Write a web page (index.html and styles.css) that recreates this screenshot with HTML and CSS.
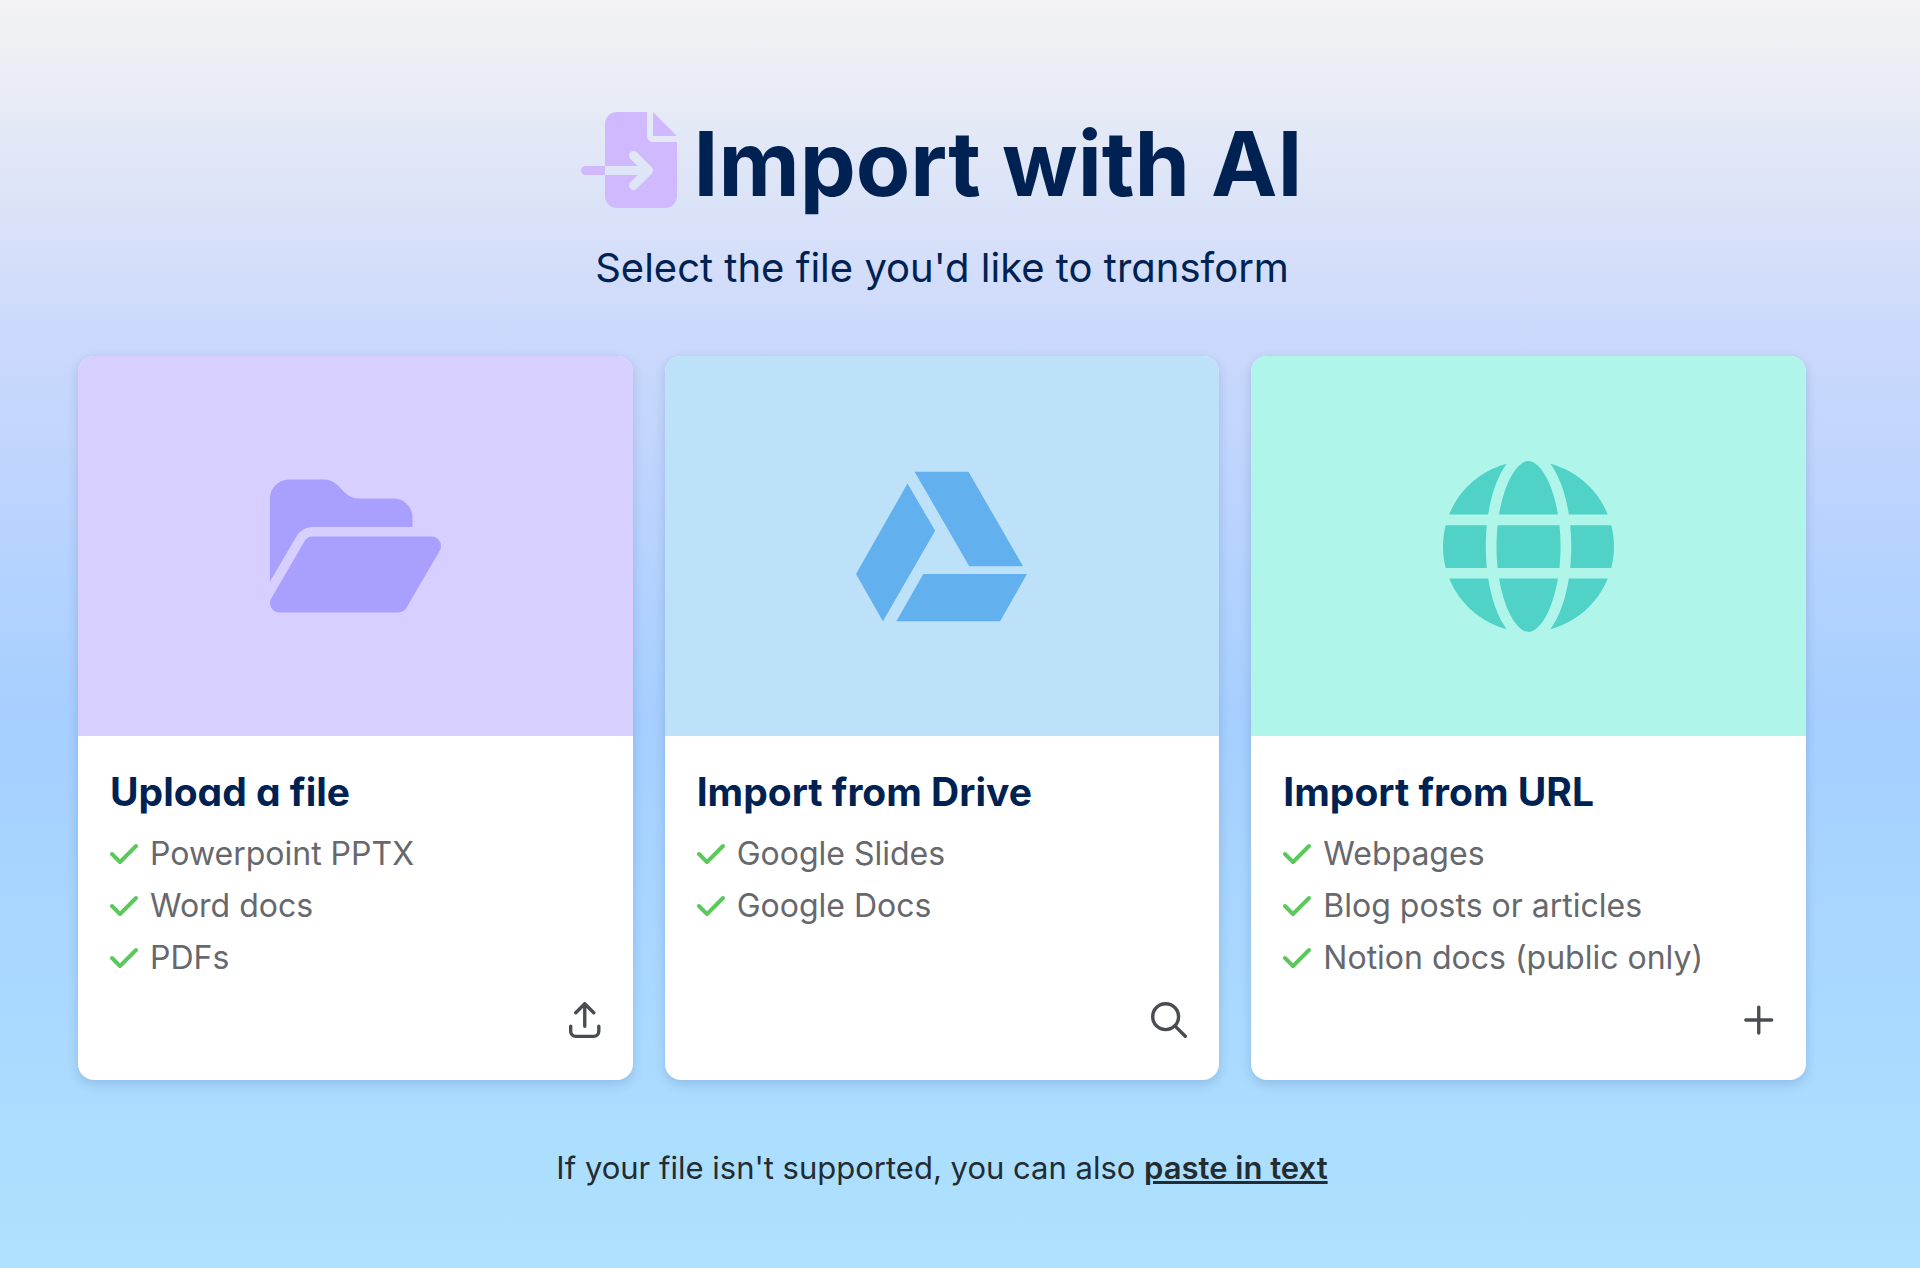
FILE: index.html
```html
<!DOCTYPE html>
<html lang="en">
<head>
<meta charset="utf-8">
<title>Import with AI</title>
<meta name="viewport" content="width=device-width, initial-scale=1">
<link rel="stylesheet" href="styles.css">
</head>
<body>
<svg class="sprite" aria-hidden="true">
  <symbol id="check" viewBox="0 0 448 512"><path d="M438.6 105.4c12.5 12.5 12.5 32.8 0 45.3l-256 256c-12.5 12.5-32.8 12.5-45.3 0l-128-128c-12.5-12.5-12.5-32.8 0-45.3s32.8-12.5 45.3 0L160 338.7 393.4 105.4c12.5-12.5 32.8-12.5 45.3 0z"/></symbol>
</svg>
<main class="page">
  <header class="header">
    <div class="headline">
      <svg class="headline-icon" viewBox="0 0 512 512" aria-hidden="true"><path d="M128 64c0-35.300 28.700-64 64-64L352 0l0 128c0 17.700 14.300 32 32 32l128 0 0 288c0 35.300-28.700 64-64 64l-256 0c-35.300 0-64-28.700-64-64l0-112 174.100 0-39 39c-9.400 9.400-9.400 24.600 0 33.900s24.600 9.400 33.900 0l80-80c9.400-9.400 9.400-24.600 0-33.900l-80-80c-9.400-9.400-24.600-9.400-33.900 0s-9.400 24.600 0 33.900l39 39L128 288l0-224zm0 224l0 48L24 336c-13.300 0-24-10.700-24-24s10.700-24 24-24l104 0zM512 128l-128 0L384 0 512 128z"/></svg>
      <h1 class="title">Import with AI</h1>
    </div>
    <p class="subtitle">Select the file you'd like to transform</p>
  </header>

  <section class="cards" aria-label="Import sources">
    <article class="card">
      <div class="art art-upload">
        <svg class="art-icon" viewBox="0 0 576 512" aria-hidden="true"><path d="M88.700 223.800L0 375.800 0 96C0 60.700 28.700 32 64 32l117.500 0c17 0 33.300 6.700 45.300 18.700l26.500 26.500c12 12 28.300 18.700 45.300 18.700L416 96c35.300 0 64 28.700 64 64l0 32-336 0c-22.800 0-43.800 12.100-55.300 31.800zm27.600 16.100C122.100 230 132.600 224 144 224l400 0c11.500 0 22 6.100 27.700 16.100s5.700 22.200-.1 32.100l-112 192C453.900 474 443.400 480 432 480L32 480c-11.500 0-22-6.100-27.700-16.100s-5.700-22.200 .1-32.100l112-192z"/></svg>
      </div>
      <div class="card-body">
        <h2 class="card-title">Upload a file</h2>
        <ul class="formats">
          <li class="format"><svg class="check"><use href="#check"/></svg>Powerpoint PPTX</li>
          <li class="format"><svg class="check"><use href="#check"/></svg>Word docs</li>
          <li class="format"><svg class="check"><use href="#check"/></svg>PDFs</li>
        </ul>
        <button class="action" type="button" aria-label="Upload a file">
          <svg class="action-icon" viewBox="0 0 448 512"><path d="M224 344V28M96 152L224 24l128 128M24 344v72a72 72 0 0 0 72 72h256a72 72 0 0 0 72-72v-72"/></svg>
        </button>
      </div>
    </article>

    <article class="card">
      <div class="art art-drive">
        <svg class="art-icon" viewBox="0 0 512 512" aria-hidden="true"><path d="M339 314.900L175.400 32h161.200l163.600 282.900H339zm-137.500 23.600L120.900 480h310.500L512 338.500H201.500zM154.100 67.400L0 338.500 80.600 480 237 208.800 154.100 67.400z"/></svg>
      </div>
      <div class="card-body">
        <h2 class="card-title">Import from Drive</h2>
        <ul class="formats">
          <li class="format"><svg class="check"><use href="#check"/></svg>Google Slides</li>
          <li class="format"><svg class="check"><use href="#check"/></svg>Google Docs</li>
        </ul>
        <button class="action" type="button" aria-label="Search Drive">
          <svg class="action-icon" viewBox="0 0 512 512"><circle cx="208" cy="208" r="184"/><path d="M340 340l148 148"/></svg>
        </button>
      </div>
    </article>

    <article class="card">
      <div class="art art-url">
        <svg class="art-icon" viewBox="0 0 512 512" aria-hidden="true"><path d="M352 256c0 22.200-1.200 43.600-3.300 64l-185.300 0c-2.200-20.400-3.300-41.800-3.300-64s1.200-43.600 3.300-64l185.300 0c2.200 20.400 3.300 41.800 3.300 64zm28.800-64l123.100 0c5.300 20.500 8.100 41.900 8.100 64s-2.800 43.500-8.100 64l-123.100 0c2.100-20.600 3.200-42 3.200-64s-1.100-43.400-3.200-64zm112.600-32l-116.700 0c-10-63.900-29.800-117.400-55.300-151.600c78.300 20.700 142 77.500 171.900 151.600zm-149.100 0l-176.600 0c6.100-36.400 15.500-68.600 27-94.700c10.500-23.600 22.200-40.700 33.500-51.500C239.400 3.200 248.700 0 256 0s16.600 3.200 27.800 13.800c11.300 10.800 23 27.900 33.500 51.500c11.600 26 20.900 58.200 27 94.700zm-209 0L18.600 160C48.600 85.900 112.200 29.100 190.600 8.400C165.100 42.600 145.300 96.100 135.300 160zM8.100 192l123.100 0c-2.100 20.600-3.200 42-3.200 64s1.100 43.400 3.200 64L8.100 320C2.800 299.500 0 278.100 0 256s2.800-43.500 8.100-64zM194.700 446.600c-11.600-26-20.900-58.200-27-94.600l176.600 0c-6.100 36.400-15.500 68.600-27 94.600c-10.500 23.600-22.200 40.700-33.500 51.500C272.600 508.800 263.300 512 256 512s-16.600-3.200-27.800-13.800c-11.300-10.800-23-27.900-33.500-51.500zM135.300 352c10 63.900 29.800 117.400 55.300 151.600C112.200 482.900 48.600 426.100 18.600 352l116.700 0zm358.100 0c-30 74.100-93.600 130.900-171.900 151.600c25.500-34.200 45.200-87.700 55.300-151.600l116.700 0z"/></svg>
      </div>
      <div class="card-body">
        <h2 class="card-title">Import from URL</h2>
        <ul class="formats">
          <li class="format"><svg class="check"><use href="#check"/></svg>Webpages</li>
          <li class="format"><svg class="check"><use href="#check"/></svg>Blog posts or articles</li>
          <li class="format"><svg class="check"><use href="#check"/></svg>Notion docs (public only)</li>
        </ul>
        <button class="action" type="button" aria-label="Add a URL">
          <svg class="action-icon" viewBox="0 0 448 512"><path d="M224 72v368M40 256h368"/></svg>
        </button>
      </div>
    </article>
  </section>

  <p class="footnote">If your file isn't supported, you can also <a class="paste-link" href="#paste">paste in text</a></p>
</main>
</body>
</html>
```
FILE: styles.css
```css
* {
  box-sizing: border-box;
}

body {
  margin: 0;
  min-height: 100vh;
  font-family: Inter, "Liberation Sans", sans-serif;
  background: linear-gradient(180deg, #f3f3f3 0%, #ccd9fb 26%, #c0d5fe 36%, #a5cfff 57%, #aee2ff 100%);
}

.sprite {
  position: absolute;
  width: 0;
  height: 0;
}

.page {
  padding: 112px 114px 48px 78px;
}

.header {
  margin-bottom: 64px;
  text-align: center;
  color: #002253;
}

.headline {
  display: flex;
  justify-content: center;
  gap: 16px;
}

.headline-icon {
  width: 96px;
  height: 96px;
  fill: #d0b9ff;
}

.title,
.subtitle,
.card-title {
  margin: 0;
  font-feature-settings: "cv11";
}

.title {
  font-size: 89px;
  font-weight: 700;
  line-height: 104px;
}

.subtitle {
  margin-top: 28px;
  font-size: 40px;
  line-height: 48px;
}

.cards {
  display: grid;
  grid-template-columns: repeat(3, 1fr);
  gap: 32px;
}

.card {
  display: flex;
  flex-direction: column;
  overflow: hidden;
  border-radius: 16px;
  background: #fff;
  box-shadow: 0 4px 12px rgba(0, 34, 83, 0.16);
}

.art {
  display: flex;
  align-items: center;
  justify-content: center;
  height: 380px;
}

.art-icon {
  width: 171px;
}

.art-upload {
  background: #d6cfff;
  fill: #a99fff;
}

.art-drive {
  background: #bde1f8;
  fill: #62b0ed;
}

.art-url {
  background: #b0f5ea;
  fill: #50d2c7;
}

.card-body {
  display: flex;
  flex: 1;
  flex-direction: column;
  padding: 32px 32px 42px;
}

.card-title {
  margin-bottom: 12px;
  font-size: 39px;
  font-weight: 700;
  line-height: 48px;
  color: #002253;
}

.formats {
  margin: 0 0 18px;
  padding: 0;
  list-style: none;
}

.format {
  display: flex;
  align-items: center;
  gap: 12px;
  font-size: 32px;
  line-height: 52px;
  color: #67686d;
}

.check {
  width: 28px;
  height: 32px;
  fill: #5ac85a;
}

.action {
  align-self: flex-end;
  margin-top: auto;
  padding: 0;
  border: 0;
  background: none;
  cursor: pointer;
}

.action-icon {
  display: block;
  height: 36px;
  fill: none;
  stroke: #4a4c53;
  stroke-width: 48;
  stroke-linecap: round;
  stroke-linejoin: round;
}

.footnote {
  margin: 68px 0 0;
  font-size: 31px;
  line-height: 40px;
  text-align: center;
  color: #232c31;
}

.paste-link {
  font-weight: 600;
  color: inherit;
  text-decoration-thickness: 3px;
}
```
